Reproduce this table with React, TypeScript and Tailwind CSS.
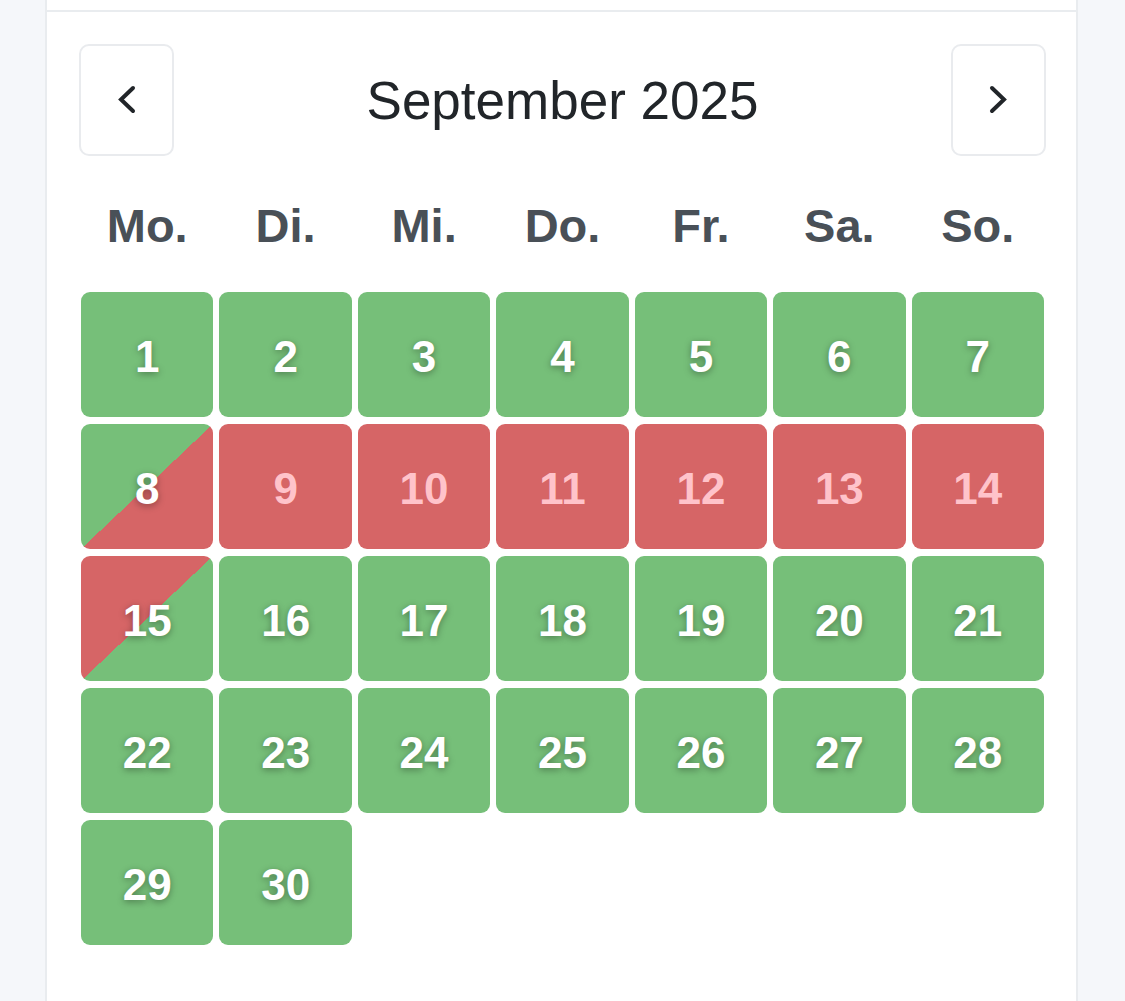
import React from 'react';

type DayState = 'free' | 'booked' | 'in' | 'out';

const days: { d: number; s: DayState }[] = Array.from({ length: 30 }, (_, i) => {
  const d = i + 1;
  let s: DayState = 'free';
  if (d === 8) s = 'in';
  else if (d >= 9 && d <= 14) s = 'booked';
  else if (d === 15) s = 'out';
  return { d, s };
});

const weekdays = ['Mo.', 'Di.', 'Mi.', 'Do.', 'Fr.', 'Sa.', 'So.'];

const cellClass: Record<DayState, string> = {
  free: 'bg-[#76bf79] text-white [text-shadow:0_2px_7px_rgba(0,0,0,0.35)]',
  booked: 'bg-[#d66566] text-[#ffc3ca]',
  in: 'bg-[linear-gradient(to_bottom_right,#76bf79_50%,#d66566_50%)] text-white [text-shadow:0_2px_7px_rgba(0,0,0,0.35)]',
  out: 'bg-[linear-gradient(to_bottom_right,#d66566_50%,#76bf79_50%)] text-white [text-shadow:0_2px_7px_rgba(0,0,0,0.35)]',
};

const Chevron: React.FC<{ dir: 'left' | 'right' }> = ({ dir }) => (
  <svg width="22" height="32" viewBox="0 0 22 32" fill="none">
    <polyline
      points={dir === 'left' ? '17,4 5,15.5 17,27' : '5,4 17,15.5 5,27'}
      stroke="#212529"
      strokeWidth="4"
      strokeLinecap="round"
      strokeLinejoin="miter"
    />
  </svg>
);

export default function App() {
  return (
    <div className="min-h-[1001px] bg-[#f5f7fa] pl-[45px] font-['Liberation_Sans',Arial,sans-serif]">
      <div className="w-[1033px] min-h-[1001px] bg-white border-x-2 border-[#e9ecef]">
        <div className="h-[12px] border-b-2 border-[#e9ecef]" />
        <div className="pl-[32px] pr-[30px] pt-[32px] pb-10">
          <div className="flex items-center justify-between">
            <button className="w-[95px] h-[112px] flex items-center justify-center rounded-[10px] border-2 border-[#e9ebee] bg-white">
              <Chevron dir="left" />
            </button>
            <div className="text-[53px] text-[#212529] leading-none">September 2025</div>
            <button className="w-[95px] h-[112px] flex items-center justify-center rounded-[10px] border-2 border-[#e9ebee] bg-white">
              <Chevron dir="right" />
            </button>
          </div>
          <div className="grid grid-cols-7 gap-x-[6px] px-[2px] mt-[35px] h-[71px] items-center">
            {weekdays.map((w) => (
              <div key={w} className="text-center text-[47px] font-bold text-[#495057]">
                {w}
              </div>
            ))}
          </div>
          <div className="grid grid-cols-7 gap-x-[6px] gap-y-[7px] px-[2px] mt-[30px]">
            {days.map(({ d, s }) => (
              <div
                key={d}
                className={`h-[125px] pt-[4px] rounded-[9px] flex items-center justify-center text-[44px] font-bold ${cellClass[s]}`}
              >
                {d}
              </div>
            ))}
          </div>
        </div>
      </div>
    </div>
  );
}
